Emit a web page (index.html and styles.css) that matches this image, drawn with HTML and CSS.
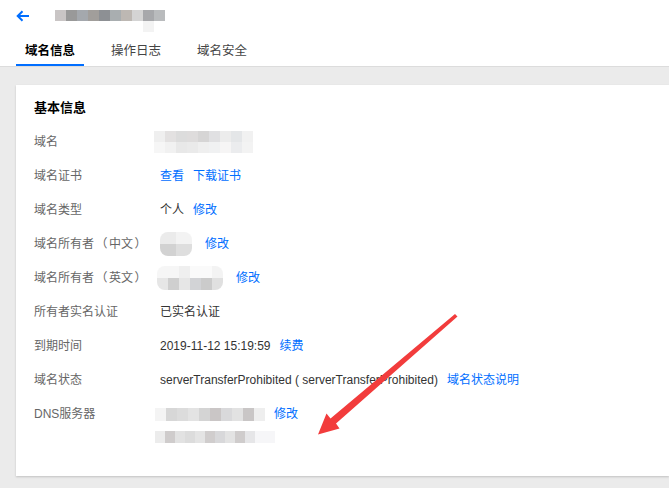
FILE: index.html
```html
<!DOCTYPE html>
<html lang="zh-CN">
<head>
    <meta charset="UTF-8">
    <meta name="viewport" content="width=device-width, initial-scale=1.0">
    <title>域名信息</title>
    <link rel="stylesheet" href="styles.css">
</head>
<body>
    <div class="header">
        <div class="topbar">
            <a class="back" href="#">
                <svg width="14" height="12" viewBox="0 0 14 12">
                    <path d="M13 6H2M6.5 1.2L1.7 6l4.8 4.8" fill="none" stroke="#006eff" stroke-width="2"/>
                </svg>
            </a>
            <div class="blur blur-title"></div>
        </div>
        <div class="tabs">
            <a class="tab active" href="#">域名信息</a>
            <a class="tab" href="#">操作日志</a>
            <a class="tab" href="#">域名安全</a>
        </div>
    </div>

    <div class="content">
        <div class="card">
            <h3 class="card-title">基本信息</h3>
            <div class="info-row">
                <div class="label">域名</div>
                <div class="value"><div class="blur blur-domain"></div></div>
            </div>
            <div class="info-row">
                <div class="label">域名证书</div>
                <div class="value"><a href="#">查看</a><a href="#">下载证书</a></div>
            </div>
            <div class="info-row">
                <div class="label">域名类型</div>
                <div class="value"><span>个人</span><a href="#">修改</a></div>
            </div>
            <div class="info-row">
                <div class="label">域名所有者<span class="paren">（</span>中文<span class="paren">）</span></div>
                <div class="value"><div class="blur blur-cn"></div><a href="#" class="edit-cn">修改</a></div>
            </div>
            <div class="info-row">
                <div class="label">域名所有者<span class="paren">（</span>英文<span class="paren">）</span></div>
                <div class="value"><div class="blur blur-en"></div><a href="#" class="edit-en">修改</a></div>
            </div>
            <div class="info-row">
                <div class="label">所有者实名认证</div>
                <div class="value"><span>已实名认证</span></div>
            </div>
            <div class="info-row">
                <div class="label">到期时间</div>
                <div class="value"><span>2019-11-12 15:19:59</span><a href="#">续费</a></div>
            </div>
            <div class="info-row">
                <div class="label">域名状态</div>
                <div class="value"><span>serverTransferProhibited ( serverTransferProhibited)</span><a href="#">域名状态说明</a></div>
            </div>
            <div class="info-row dns-row">
                <div class="label">DNS服务器</div>
                <div class="dns-list">
                    <div class="value"><div class="blur blur-dns1"></div><a href="#">修改</a></div>
                    <div class="value"><div class="blur blur-dns2"></div></div>
                </div>
            </div>
        </div>
    </div>

    <svg class="mark" width="669" height="488" viewBox="0 0 669 488">
        <polygon points="455,314 457.5,316.5 336,423.5 339.5,428.5 318,434.5 326.5,413.5 330.5,418.5" fill="#f23c3c"/>
    </svg>
</body>
</html>
```

FILE: styles.css
```css
body {
    margin: 0;
    padding: 0;
    background-color: #ebebeb;
    font-family: "Liberation Sans", Arial, "Noto Sans CJK SC", sans-serif;
    font-size: 12px;
    color: #333;
    width: 669px;
    height: 488px;
    overflow: hidden;
    position: relative;
}

a {
    color: #006eff;
    text-decoration: none;
}

.header {
    background-color: #fff;
    border-bottom: 1px solid #dcdcdc;
}

.topbar {
    height: 32px;
    display: flex;
    align-items: center;
    padding-left: 16px;
}

.back {
    display: flex;
    width: 14px;
    height: 12px;
}

.blur-title {
    margin-left: 25px;
    width: 110px;
    height: 22px;
    margin-top: 10px;
    background:
        linear-gradient(90deg, #c9c5c5 0 11px, #999999 11px 22px, #a4a8ad 22px 33px, #a19e9b 33px 44px, #8d9094 44px 55px, #a9aeb0 55px 66px, #bdb8b3 66px 77px, #d4d4d4 77px 88px, #a7a8ab 88px 99px, #b9bbbd 99px 110px) top left / 110px 11px no-repeat,
        linear-gradient(#f3f3f3, #f3f3f3) 88px 11px / 11px 11px no-repeat;
}

.tabs {
    display: flex;
    padding-left: 16px;
    gap: 18px;
}

.tab {
    padding: 10px 9px 4px;
    line-height: 18px;
    font-size: 12.5px;
    color: #444;
    border-bottom: 2px solid transparent;
}

.tab.active {
    color: #000;
    font-weight: bold;
    border-bottom-color: #006eff;
}

.content {
    padding: 18px 0 0 16px;
}

.card {
    background-color: #fff;
    padding: 14px 18px 22px;
    box-shadow: 0 1px 2px rgba(0, 0, 0, 0.18);
}

.card-title {
    margin: 0 0 8px;
    font-size: 13px;
    line-height: 18px;
    font-weight: bold;
    color: #000;
}

.info-row {
    display: flex;
    padding: 8px 0;
    line-height: 18px;
}

.label {
    width: 126px;
    flex-shrink: 0;
    color: #666;
}

.paren {
    display: inline-block;
    width: 15px;
    text-align: center;
}

.value {
    display: flex;
    align-items: center;
    gap: 9px;
    height: 18px;
}

.blur {
    flex-shrink: 0;
}

.blur-domain {
    margin-left: -6px;
    width: 99px;
    height: 22px;
    background:
        linear-gradient(90deg, #efefef 0 11px, #e3e1e1 11px 22px, #dcdcdc 22px 33px, #dedcdc 33px 44px, #d6d5d5 44px 55px, #e0e0e2 55px 66px, #ececec 66px 77px, #e4e6e8 77px 88px, #f1f1f1 88px 99px) top left / 99px 11px no-repeat,
        linear-gradient(90deg, #f6f6f6 0 11px, #f1f1f1 11px 22px, #e8e8e8 22px 33px, #eaeaea 33px 44px, #efefef 44px 55px, #f0f1f2 55px 66px, #f6f5f5 66px 77px, #ebecee 77px 88px, #f3f3f3 88px 99px) bottom left / 99px 11px no-repeat;
}

.blur-cn {
    width: 32px;
    height: 24px;
    border-radius: 8px;
    background:
        linear-gradient(90deg, #ebebeb 0 16px, #f3f3f3 16px 32px) top left / 32px 12px no-repeat,
        linear-gradient(90deg, #d2d2d2 0 16px, #dedede 16px 32px) bottom left / 32px 12px no-repeat;
}

.edit-cn {
    margin-left: 4px;
}

.blur-en {
    margin-left: -3px;
    width: 66px;
    height: 24px;
    border-radius: 8px;
    background:
        linear-gradient(90deg, #f6f6f6 0 22px, #efefef 22px 33px, #fafafa 33px 55px, #f3f3f3 55px 66px) top left / 66px 12px no-repeat,
        linear-gradient(90deg, #e6e6e6 0 11px, #cfcfcf 11px 22px, #e6e6e6 22px 33px, #d2d3d6 33px 44px, #cbcbcb 44px 55px, #e0e0e0 55px 66px) bottom left / 66px 12px no-repeat;
}

.edit-en {
    margin-left: 4px;
}

.dns-list {
    display: flex;
    flex-direction: column;
    gap: 5px;
}

.blur-dns1 {
    margin-left: -5px;
    width: 110px;
    height: 13px;
    background: linear-gradient(90deg, #f4f4f4 0 11px, #d7d7d7 11px 22px, #dcdcdc 22px 33px, #e3e3e3 33px 44px, #d4d4d4 44px 55px, #cac6c6 55px 66px, #d9d9db 66px 77px, #e2e2e2 77px 88px, #c9c6c6 88px 99px, #eeeeee 99px 110px);
}

.blur-dns2 {
    margin-left: -5px;
    width: 120px;
    height: 12px;
    background: linear-gradient(90deg, #ececec 0 10px, #cfcccc 10px 20px, #e2e2e2 20px 30px, #dcdcdc 30px 40px, #e4e4e4 40px 50px, #d0cdcd 50px 60px, #d8d8da 60px 70px, #e3e3e3 70px 80px, #cfcccc 80px 90px, #e6e6e8 90px 100px, #f6f6f8 100px 120px);
}

.mark {
    position: absolute;
    top: 0;
    left: 0;
    pointer-events: none;
}
```
